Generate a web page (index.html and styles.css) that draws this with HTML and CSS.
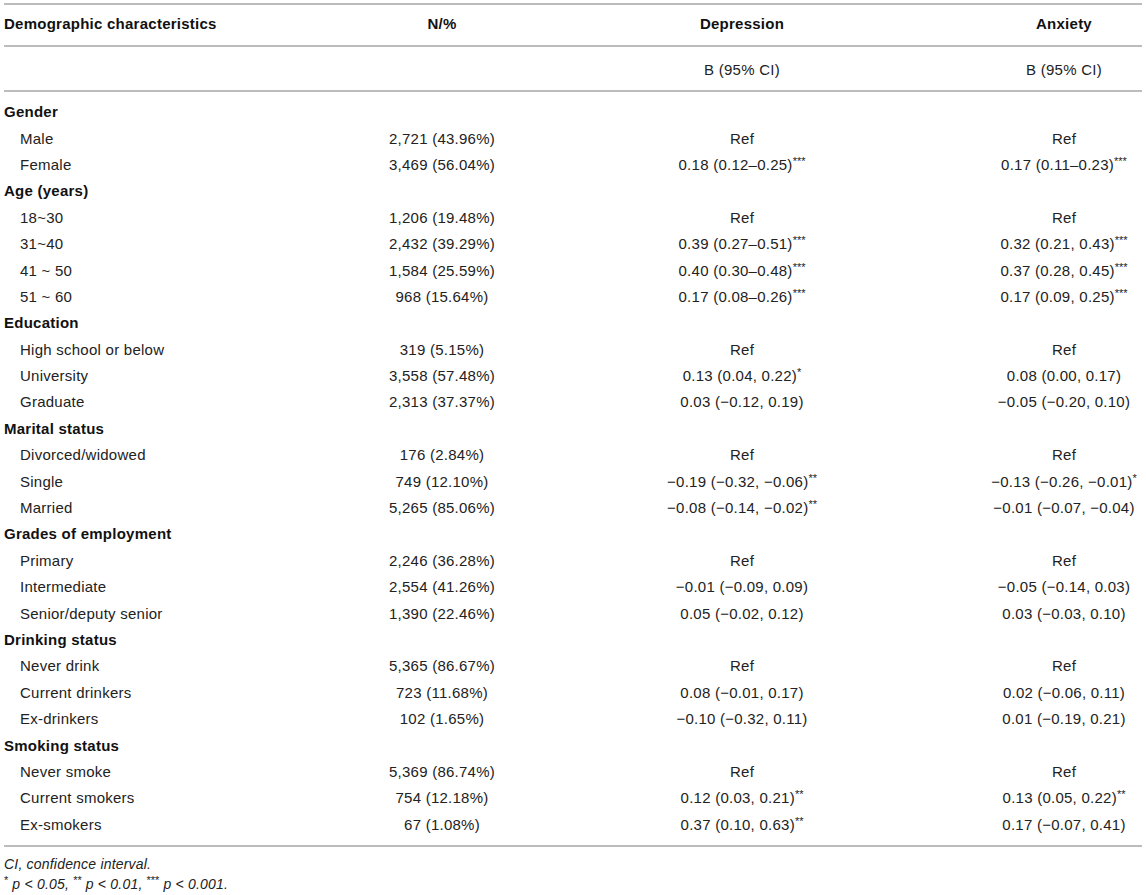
FILE: index.html
```html
<!DOCTYPE html>
<html lang="en">
<head>
  <meta charset="UTF-8">
  <meta name="viewport" content="width=device-width, initial-scale=1.0">
  <title>Demographic characteristics</title>
  <link rel="stylesheet" href="styles.css">
</head>
<body>
  <div class="table-wrap">
    <table class="data-table">
      <colgroup>
        <col class="col-label">
        <col class="col-n">
        <col class="col-dep">
        <col class="col-anx">
      </colgroup>
      <thead>
        <tr class="head-main">
          <th class="cell-label">Demographic characteristics</th>
          <th>N/%</th>
          <th>Depression</th>
          <th>Anxiety</th>
        </tr>
        <tr class="head-sub">
          <td></td>
          <td></td>
          <td>B (95% CI)</td>
          <td>B (95% CI)</td>
        </tr>
      </thead>
      <tbody>
        <!-- Gender -->
        <tr class="group first"><td class="cell-label" colspan="4">Gender</td></tr>
        <tr><td class="cell-label">Male</td><td>2,721 (43.96%)</td><td>Ref</td><td>Ref</td></tr>
        <tr><td class="cell-label">Female</td><td>3,469 (56.04%)</td><td>0.18 (0.12–0.25)<sup>***</sup></td><td>0.17 (0.11–0.23)<sup>***</sup></td></tr>

        <!-- Age -->
        <tr class="group"><td class="cell-label" colspan="4">Age (years)</td></tr>
        <tr><td class="cell-label">18~30</td><td>1,206 (19.48%)</td><td>Ref</td><td>Ref</td></tr>
        <tr><td class="cell-label">31~40</td><td>2,432 (39.29%)</td><td>0.39 (0.27–0.51)<sup>***</sup></td><td>0.32 (0.21, 0.43)<sup>***</sup></td></tr>
        <tr><td class="cell-label">41 ~ 50</td><td>1,584 (25.59%)</td><td>0.40 (0.30–0.48)<sup>***</sup></td><td>0.37 (0.28, 0.45)<sup>***</sup></td></tr>
        <tr><td class="cell-label">51 ~ 60</td><td>968 (15.64%)</td><td>0.17 (0.08–0.26)<sup>***</sup></td><td>0.17 (0.09, 0.25)<sup>***</sup></td></tr>

        <!-- Education -->
        <tr class="group"><td class="cell-label" colspan="4">Education</td></tr>
        <tr><td class="cell-label">High school or below</td><td>319 (5.15%)</td><td>Ref</td><td>Ref</td></tr>
        <tr><td class="cell-label">University</td><td>3,558 (57.48%)</td><td>0.13 (0.04, 0.22)<sup>*</sup></td><td>0.08 (0.00, 0.17)</td></tr>
        <tr><td class="cell-label">Graduate</td><td>2,313 (37.37%)</td><td>0.03 (−0.12, 0.19)</td><td>−0.05 (−0.20, 0.10)</td></tr>

        <!-- Marital status -->
        <tr class="group"><td class="cell-label" colspan="4">Marital status</td></tr>
        <tr><td class="cell-label">Divorced/widowed</td><td>176 (2.84%)</td><td>Ref</td><td>Ref</td></tr>
        <tr><td class="cell-label">Single</td><td>749 (12.10%)</td><td>−0.19 (−0.32, −0.06)<sup>**</sup></td><td>−0.13 (−0.26, −0.01)<sup>*</sup></td></tr>
        <tr><td class="cell-label">Married</td><td>5,265 (85.06%)</td><td>−0.08 (−0.14, −0.02)<sup>**</sup></td><td>−0.01 (−0.07, −0.04)</td></tr>

        <!-- Grades of employment -->
        <tr class="group"><td class="cell-label" colspan="4">Grades of employment</td></tr>
        <tr><td class="cell-label">Primary</td><td>2,246 (36.28%)</td><td>Ref</td><td>Ref</td></tr>
        <tr><td class="cell-label">Intermediate</td><td>2,554 (41.26%)</td><td>−0.01 (−0.09, 0.09)</td><td>−0.05 (−0.14, 0.03)</td></tr>
        <tr><td class="cell-label">Senior/deputy senior</td><td>1,390 (22.46%)</td><td>0.05 (−0.02, 0.12)</td><td>0.03 (−0.03, 0.10)</td></tr>

        <!-- Drinking status -->
        <tr class="group"><td class="cell-label" colspan="4">Drinking status</td></tr>
        <tr><td class="cell-label">Never drink</td><td>5,365 (86.67%)</td><td>Ref</td><td>Ref</td></tr>
        <tr><td class="cell-label">Current drinkers</td><td>723 (11.68%)</td><td>0.08 (−0.01, 0.17)</td><td>0.02 (−0.06, 0.11)</td></tr>
        <tr><td class="cell-label">Ex-drinkers</td><td>102 (1.65%)</td><td>−0.10 (−0.32, 0.11)</td><td>0.01 (−0.19, 0.21)</td></tr>

        <!-- Smoking status -->
        <tr class="group"><td class="cell-label" colspan="4">Smoking status</td></tr>
        <tr><td class="cell-label">Never smoke</td><td>5,369 (86.74%)</td><td>Ref</td><td>Ref</td></tr>
        <tr><td class="cell-label">Current smokers</td><td>754 (12.18%)</td><td>0.12 (0.03, 0.21)<sup>**</sup></td><td>0.13 (0.05, 0.22)<sup>**</sup></td></tr>
        <tr class="last"><td class="cell-label">Ex-smokers</td><td>67 (1.08%)</td><td>0.37 (0.10, 0.63)<sup>**</sup></td><td>0.17 (−0.07, 0.41)</td></tr>
      </tbody>
    </table>

    <div class="table-notes">
      <p>CI, confidence interval.</p>
      <p><sup>*</sup> p &lt; 0.05, <sup>**</sup> p &lt; 0.01, <sup>***</sup> p &lt; 0.001.</p>
    </div>
  </div>
</body>
</html>
```

FILE: styles.css
```css
body {
  margin: 0;
  padding: 0;
  background: #ffffff;
  color: #222222;
  font-family: "Liberation Sans", Arial, sans-serif;
  font-size: 15px;
  letter-spacing: 0.25px;
}

.table-wrap {
  padding: 3px 4px 0 4px;
}

.data-table {
  width: 1138px;
  table-layout: fixed;
  border-collapse: collapse;
}

.col-label { width: 382px; }
.col-n { width: 112px; }
.col-dep { width: 488px; }
.col-anx { width: 156px; }

.data-table th,
.data-table td {
  padding: 0;
  text-align: center;
  white-space: nowrap;
  line-height: 18px;
}

.data-table .cell-label {
  text-align: left;
  padding-left: 16px;
}

/* header rows */
.head-main th {
  font-weight: bold;
  color: #111111;
  padding-top: 10px;
  padding-bottom: 12px;
  border-top: 2px solid #bcbcbc;
  border-bottom: 2px solid #bcbcbc;
}

.head-main th.cell-label {
  padding-left: 0;
}

.head-sub td {
  padding-top: 14px;
  padding-bottom: 11px;
  border-bottom: 2px solid #bcbcbc;
}

/* body rows */
tbody td {
  height: 26.4px;
  padding: 0;
}

tbody tr.group td.cell-label {
  font-weight: bold;
  color: #111111;
  padding-left: 0;
}

tbody tr.first td {
  padding-top: 7px;
}

tbody tr.last td {
  padding-bottom: 7px;
  border-bottom: 2px solid #bcbcbc;
}

sup {
  font-size: 11px;
  line-height: 0;
  letter-spacing: 0;
  vertical-align: 5px;
}

.table-notes {
  padding-top: 7px;
  font-style: italic;
  font-size: 14px;
  letter-spacing: 0.2px;
}

.table-notes p {
  margin: 0;
  line-height: 20px;
}

.table-notes sup {
  font-style: normal;
}
```
